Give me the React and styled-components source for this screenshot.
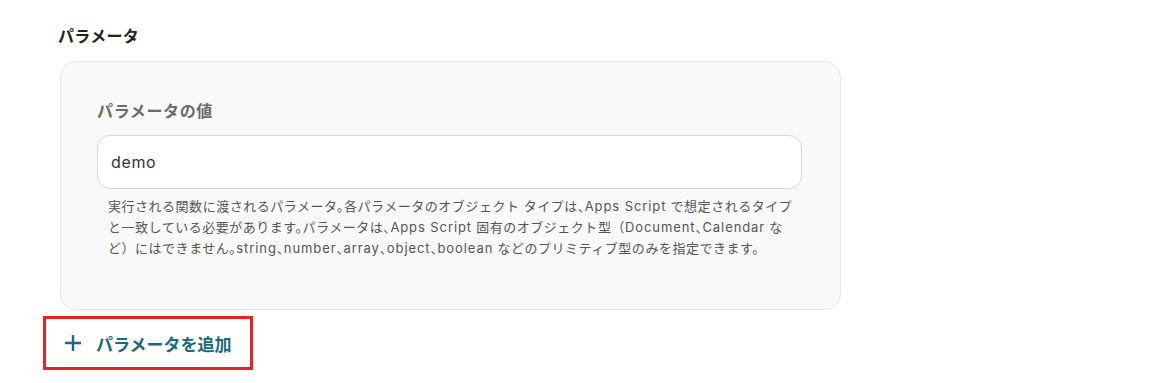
import styled, { createGlobalStyle } from 'styled-components'

const Global = createGlobalStyle`
    body{
        margin:0;
        background:#fff;
        font-family: Inter, "Noto Sans CJK JP", sans-serif;
    }
`

const Page = styled.div`
    padding: 24px 0 0 58px;
    width: 783px;
`

const Heading = styled.h2`
    margin: 0 0 13px;
    font-size: 16px;
    line-height: 24px;
    font-weight: 700;
    color: #222;
    letter-spacing: 0.02em;
`

const Card = styled.div`
    margin-left: 2px;
    width: 781px;
    box-sizing: border-box;
    background: #f9f9f9;
    border: 1px solid #e6e6e6;
    border-radius: 16px;
    padding: 37px 38px 50px 36px;
`

const Label = styled.div`
    font-size: 16px;
    line-height: 24px;
    font-weight: 700;
    color: #6a6a6a;
    letter-spacing: 0.04em;
    margin-bottom: 12px;
`

const Input = styled.input`
    display: block;
    width: 100%;
    height: 54px;
    box-sizing: border-box;
    border: 1px solid #d6d6dc;
    border-radius: 13px;
    background: #fff;
    padding: 0 13px;
    font-family: Inter, "Noto Sans CJK JP", sans-serif;
    font-size: 16px;
    letter-spacing: 0.04em;
    color: #333;
    outline: none;
`

const Help = styled.p`
    margin: 7px 0 0;
    padding: 0 0 0 11px;
    font-size: 13px;
    line-height: 21px;
    color: #555;
    letter-spacing: 0.04em;
    font-feature-settings: "halt";
    white-space: nowrap;
`

// brackets keep their full width, only 、。 are halved
const Bracket = styled.span`
    font-feature-settings: normal;
`

const Latin = styled.span`
    letter-spacing: 0.07em;
`

const AddButton = styled.button`
    margin: 6px 0 0 -15px;
    display: flex;
    align-items: center;
    gap: 14px;
    height: 54px;
    padding: 0 18px;
    box-sizing: border-box;
    background: #fff;
    border: 3px solid ${p => p.highlight ? '#e42424' : 'transparent'};
    font-family: Inter, "Noto Sans CJK JP", sans-serif;
    font-size: 17px;
    font-weight: 700;
    color: #1b6a7b;
    cursor: pointer;
`

const Plus = () => (
    <svg width="18" height="18" viewBox="0 0 18 18" fill="none">
        <path d="M9 1v16M1 9h16" stroke="#1b6a7b" strokeWidth="2.4" />
    </svg>
)

export default function App(){
    return(
        <Page>
            <Global />
            <Heading>パラメータ</Heading>
            <Card>
                <Label>パラメータの値</Label>
                <Input defaultValue="demo" />
                <Help>
                    実行される関数に渡されるパラメータ。各パラメータのオブジェクト タイプは、<Latin>Apps Script</Latin> で想定されるタイプ<br />
                    と一致している必要があります。パラメータは、<Latin>Apps Script</Latin> 固有のオブジェクト型<Bracket>（</Bracket><Latin>Document</Latin>、<Latin>Calendar</Latin> な<br />
                    ど<Bracket>）</Bracket>にはできません。<Latin>string</Latin>、<Latin>number</Latin>、<Latin>array</Latin>、<Latin>object</Latin>、<Latin>boolean</Latin> などのプリミティブ型のみを指定できます。
                </Help>
            </Card>
            <AddButton highlight>
                <Plus />
                パラメータを追加
            </AddButton>
        </Page>
    )
}
